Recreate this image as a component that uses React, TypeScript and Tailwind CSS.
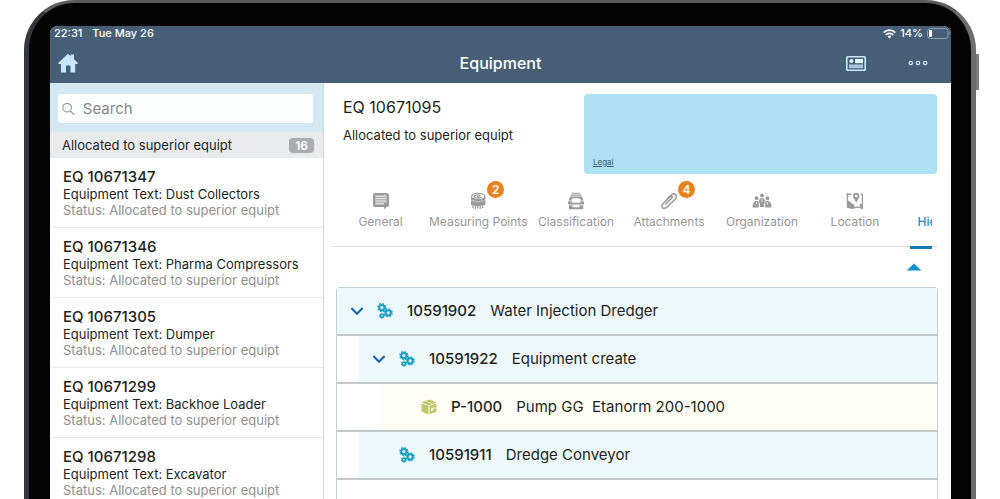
import React, { useState } from 'react';

type Equipment = { id: string; text: string };

type Node = {
  id: string;
  text: string;
  kind: 'equipment' | 'part';
  level: number;
  open?: boolean;
};

const equipment: Equipment[] = [
  { id: 'EQ 10671347', text: 'Dust Collectors' },
  { id: 'EQ 10671346', text: 'Pharma Compressors' },
  { id: 'EQ 10671305', text: 'Dumper' },
  { id: 'EQ 10671299', text: 'Backhoe Loader' },
  { id: 'EQ 10671298', text: 'Excavator' },
];

const nodes: Node[] = [
  { id: '10591902', text: 'Water Injection Dredger', kind: 'equipment', level: 0, open: true },
  { id: '10591922', text: 'Equipment create', kind: 'equipment', level: 1, open: true },
  { id: 'P-1000', text: 'Pump GG  Etanorm 200-1000', kind: 'part', level: 2 },
  { id: '10591911', text: 'Dredge Conveyor', kind: 'equipment', level: 1 },
];

const indents = ['ml-0', 'ml-[22px]', 'ml-[44px]'];

const HomeIcon = () => (
  <svg width="20" height="20" viewBox="0 0 20 20" fill="#c9e6ff">
    <path d="M10 0.8 L12.6 3.2 V1.6 H16 V6.3 L19.6 9.8 V11 H17.2 V19.4 H12.4 V12.4 H8 V19.4 H3 V11 H0.4 V9.8 Z" />
  </svg>
);

const WifiIcon = () => (
  <svg width="13" height="10" viewBox="0 0 13 10" fill="none" stroke="#fff" strokeWidth="1.7">
    <path d="M0.7 3.6 A8.2 8.2 0 0 1 12.3 3.6" />
    <path d="M2.8 5.9 A5.2 5.2 0 0 1 10.2 5.9" />
    <path d="M6.5 9.6 L4.5 7.5 A2.9 2.9 0 0 1 8.5 7.5 Z" fill="#fff" stroke="none" />
  </svg>
);

const BatteryIcon = () => (
  <svg width="24" height="11" viewBox="0 0 24 11">
    <rect x="0.5" y="0.5" width="20.5" height="10" rx="3" fill="none" stroke="#8da0b0" />
    <rect x="2" y="2" width="3" height="7" rx="1" fill="#fff" />
    <path d="M22.2 3.6 Q23.6 5.5 22.2 7.4 Z" fill="#8da0b0" />
  </svg>
);

const CardIcon = () => (
  <svg width="20" height="15" viewBox="0 0 20 15">
    <rect x="0.8" y="0.8" width="18.4" height="13.4" rx="0.8" fill="none" stroke="#c9e6ff" strokeWidth="1.6" />
    <circle cx="5.4" cy="5" r="2" fill="#e6f4ff" />
    <rect x="9" y="3" width="8" height="4.2" fill="#e6f4ff" />
    <rect x="3" y="8.4" width="14" height="3.8" fill="#a9c4dc" />
  </svg>
);

const DotsIcon = () => (
  <svg width="20" height="6" viewBox="0 0 20 6" fill="none" stroke="#d6ebff" strokeWidth="1.2">
    <circle cx="2.8" cy="3" r="1.7" />
    <circle cx="10" cy="3" r="1.7" />
    <circle cx="17.2" cy="3" r="1.7" />
  </svg>
);

const SearchIcon = () => (
  <svg width="14" height="14" viewBox="0 0 14 14" fill="none" stroke="#85888c" strokeWidth="1.1">
    <circle cx="5.6" cy="5.6" r="4.7" />
    <path d="M9 9 L13.2 13.2" />
  </svg>
);

const GeneralIcon = () => (
  <svg width="18" height="18" viewBox="0 0 18 18">
    <path d="M3 1 H15 Q17 1 17 3 V13 Q17 15 15 15 H14.2 L12 17.4 V15 H3 Q1 15 1 13 V3 Q1 1 3 1 Z" fill="#9a9a9a" />
    <path d="M3.4 3.4 H14.6 V11 H12 V12.6 H3.4 Z" fill="#e4e4e4" />
    <path d="M3.4 5.4 H14.6 M3.4 7.8 H14.6 M3.4 10.2 H14.6" stroke="#9a9a9a" strokeWidth="0.9" />
  </svg>
);

const MeasuringIcon = () => (
  <svg width="18" height="18" viewBox="0 0 18 18">
    <path d="M2 4.5 V13 H3.4 V16 H4.6 V13.6 H5.8 V17 H7 V13.9 H8.2 V16.6 H9.4 V13.9 H10.6 V17 H11.8 V13.6 H13 V16 H14.2 V13 H16.4 V4.5 Z" fill="#9a9a9a" />
    <ellipse cx="9.2" cy="4.4" rx="6.7" ry="3.1" fill="#fff" stroke="#9a9a9a" strokeWidth="1.1" />
    <path d="M13.2 4.8 A4 1.6 0 1 1 9.6 2.9 Q12 3.3 10.8 4.4 Q9.6 5.2 8 4.5" fill="none" stroke="#9a9a9a" strokeWidth="1.1" />
    <path d="M2.3 8.4 Q8 11 15 8.6" fill="none" stroke="#d2d2d2" strokeWidth="0.9" />
  </svg>
);

const ClassificationIcon = () => (
  <svg width="18" height="18" viewBox="0 0 18 18" fill="#9a9a9a">
    <path d="M5 0.8 H13.4 V1.8 H5 Z M4 2.6 H14.4 V3.8 H4 Z" />
    <path d="M3.2 4.6 H15 L16.6 8.4 H14 Q13.4 6.2 11.6 6.2 H6.6 Q4.8 6.2 4.2 8.4 H1.6 Z" />
    <path d="M1.2 9.3 H5 V10.8 H13.2 V9.3 H17 V12.6 H1.2 Z" />
    <path d="M2 13.2 H5.6 V15.2 H12.6 V13.2 H16.2 V17.2 H2 Z" />
  </svg>
);

const AttachmentIcon = () => (
  <svg width="18" height="18" viewBox="0 0 18 18" fill="none" stroke="#9a9a9a" strokeWidth="1.5" strokeLinecap="round">
    <path d="M5.6 12.2 L11.6 6.2 Q12.8 5 11.9 4.3 Q11 3.8 9.8 5 L3.2 11.4 Q0.8 14 2.6 15.8 Q4.6 17.4 7.2 14.9 L14.8 7.5 Q17.6 4.6 15.6 2.6 Q13.3 0.8 10.6 3.5 L7.4 6.6" />
  </svg>
);

const OrganizationIcon = () => (
  <svg width="20" height="18" viewBox="0 0 20 18" fill="#9a9a9a">
    <circle cx="10" cy="3.4" r="2" />
    <circle cx="4.6" cy="6.2" r="1.9" />
    <circle cx="15.4" cy="6.2" r="1.9" />
    <path d="M7 9.6 Q7 6 10 6 Q13 6 13 9.6 L12.2 11.4 V15 H7.8 V11.4 Z" />
    <path d="M0.6 15.4 Q0.6 9 4.6 8.8 Q6 8.9 6.8 10 V15.4 Z" />
    <path d="M19.4 15.4 Q19.4 9 15.4 8.8 Q14 8.9 13.2 10 V15.4 Z" />
    <path d="M9.6 7 H10.4 L10.3 10 H9.7 Z M4.2 10 H5 L4.9 12.6 H4.3 Z M15 10 H15.8 L15.7 12.6 H15.1 Z" fill="#fff" />
  </svg>
);

const LocationIcon = () => (
  <svg width="18" height="18" viewBox="0 0 18 18">
    <path d="M5.5 2.6 L1.4 1.6 V15 L5.8 16.4 L11.5 15 L16.4 16.4 V2.6 L14.4 1.8" fill="none" stroke="#9a9a9a" strokeWidth="1.3" />
    <path d="M1.6 8.8 Q4.6 9 5 11 Q8.6 11.6 8.8 15.4 L5.8 16.6 L1.6 15.2 Z" fill="#9a9a9a" />
    <path d="M14 12 H16.2 V16 L14 15.2 Z" fill="#9a9a9a" />
    <path d="M10.2 0.8 A3.2 3.2 0 0 1 13.4 4 Q13.4 6 10.2 10.4 Q7 6 7 4 A3.2 3.2 0 0 1 10.2 0.8 Z" fill="#9a9a9a" />
    <circle cx="10.2" cy="4" r="1.3" fill="#fff" />
  </svg>
);

const GearsIcon = () => (
  <svg width="16" height="16" viewBox="0 0 16 16" fill="none" stroke="#1b9cc4">
    <circle cx="4.8" cy="4.6" r="2.6" strokeWidth="2" />
    <circle cx="4.8" cy="4.6" r="3.9" strokeWidth="1.4" strokeDasharray="1.7 1.36" />
    <circle cx="11.2" cy="9.8" r="2.6" strokeWidth="2" />
    <circle cx="11.2" cy="9.8" r="3.9" strokeWidth="1.4" strokeDasharray="1.7 1.36" />
    <circle cx="4.9" cy="12.8" r="1.6" strokeWidth="1.6" />
    <circle cx="4.9" cy="12.8" r="2.6" strokeWidth="0.9" strokeDasharray="1.2 0.84" />
  </svg>
);

const BoxIcon = () => (
  <svg width="16" height="16" viewBox="0 0 16 16">
    <path d="M8 0.6 L15.2 3.4 L8 6.2 L0.8 3.4 Z" fill="#b9c25c" />
    <path d="M0.6 4.2 L7.5 6.9 V15.4 L0.6 12.4 Z" fill="#bfc76b" />
    <path d="M15.4 4.2 L8.5 6.9 V15.4 L15.4 12.4 Z" fill="#bfc76b" />
    <path d="M4.4 2 L11.6 4.8" stroke="#fffff4" strokeWidth="0.7" />
    <path d="M10 9.6 L13.6 8.2 V9.6 L11.6 10.4 V12 L10 12.6 Z" fill="#fffff4" />
  </svg>
);

const ChevronIcon = () => (
  <svg width="14" height="14" viewBox="0 0 14 14" fill="none" stroke="#1a62ae" strokeWidth="2">
    <path d="M1.4 4 L7 9.8 L12.6 4" />
  </svg>
);

const tabs = [
  { label: 'General', icon: <GeneralIcon /> },
  { label: 'Measuring Points', icon: <MeasuringIcon />, badge: 2 },
  { label: 'Classification', icon: <ClassificationIcon /> },
  { label: 'Attachments', icon: <AttachmentIcon />, badge: 4 },
  { label: 'Organization', icon: <OrganizationIcon /> },
  { label: 'Location', icon: <LocationIcon /> },
];

const Header = () => (
  <header className="shrink-0 bg-[#465f76] text-white">
    <div className="flex h-[15px] items-center justify-between pl-1 text-[11px] leading-[15px] font-medium">
      <div className="flex gap-[10px]">
        <span>22:31</span>
        <span>Tue May 26</span>
      </div>
      <div className="flex items-center gap-1">
        <WifiIcon />
        <span>14%</span>
        <BatteryIcon />
      </div>
    </div>
    <div className="grid h-[42px] grid-cols-[1fr_auto_1fr] items-center pt-[2px] pr-[23px] pl-2">
      <button aria-label="Home" className="justify-self-start"><HomeIcon /></button>
      <h1 className="pl-[15px] text-base leading-5 font-medium">Equipment</h1>
      <div className="flex items-center gap-[42px] justify-self-end">
        <button aria-label="Details"><CardIcon /></button>
        <button aria-label="More"><DotsIcon /></button>
      </div>
    </div>
  </header>
);

const Sidebar = () => (
  <aside className="w-[274px] shrink-0 border-r border-[#d3d6d9]">
    <div className="bg-[#d5e7f3] px-2 pt-[11px] pb-[9px]">
      <label className="mr-[2px] flex h-[29px] items-center gap-2 rounded-[3px] bg-[#fcfeff] px-1">
        <SearchIcon />
        <input
          type="text"
          aria-label="Search"
          placeholder="Search"
          className="w-full bg-transparent text-[15px] leading-5 outline-none placeholder:text-[#85888c]"
        />
      </label>
    </div>
    <div className="flex h-[26px] items-center justify-between bg-[#e9eaeb] pr-[9px] pl-3 text-[13px] leading-4">
      <h2>Allocated to superior equipt</h2>
      <span className="rounded-[4px] bg-[#a9adb2] px-[6px] text-xs leading-[15px] font-semibold text-white">16</span>
    </div>
    <ul className="ml-[2px]">
      {equipment.map((item) => (
        <li key={item.id} className="h-[70px] border-b border-[#e8e9ea] pt-[9px] pl-[11px]">
          <p className="text-[15px] leading-[19px] font-medium">{item.id}</p>
          <p className="text-[13px] leading-4">Equipment Text: {item.text}</p>
          <p className="text-[13px] leading-4 text-[#8f8f8f]">Status: Allocated to superior equipt</p>
        </li>
      ))}
    </ul>
  </aside>
);

const TabBar = () => (
  <div className="mr-[14px] ml-2 h-[73px] border-b border-[#dadcdd]">
    <nav className="mr-[5px] flex h-[75px] overflow-hidden pl-[2px] text-xs leading-4">
      {tabs.map((tab) => (
        <button key={tab.label} className="flex min-w-[93px] shrink-0 flex-col items-center gap-1 px-[2px] pt-[18px] text-[#979797]">
          <span className="relative">
            {tab.icon}
            {tab.badge && (
              <span className="absolute -top-[11px] left-[18px] h-[17px] w-[17px] rounded-full bg-[#e5831c] text-center text-xs leading-[17px] font-semibold text-white">
                {tab.badge}
              </span>
            )}
          </span>
          {tab.label}
        </button>
      ))}
      <button className="ml-2 shrink-0 border-b-[3px] border-[#127bb8] px-2 pt-[23px] font-medium text-[#1a8cc6]">Hierarchy</button>
    </nav>
  </div>
);

const Hierarchy = () => {
  const [collapsed, setCollapsed] = useState(false);

  return (
    <>
      <div className="flex h-10 items-center justify-end pr-[29px]">
        <button aria-label="Collapse hierarchy" onClick={() => setCollapsed(!collapsed)}>
          <svg width="16" height="8" viewBox="0 0 16 8" fill="#0f93c8">
            <path d="M8 0.4 L15.4 7.6 H0.6 Z" />
          </svg>
        </button>
      </div>
      <ul className="mr-[13px] ml-3 flex-1 rounded-t-[4px] border border-b-0 border-[#c2d3d8]">
        {!collapsed && nodes.map((node) => (
          <li key={node.id} className="border-b-2 border-[#c3c8ca]">
            <div className={`${indents[node.level]} ${node.kind === 'part' ? 'bg-[#fffff6]' : 'bg-[#edf8fa]'} flex h-[46px] items-center pl-[13px] text-[15px] leading-5`}>
              {node.open ? (
                <button aria-label={`Toggle ${node.id}`} className="w-[27px]"><ChevronIcon /></button>
              ) : (
                <span className="w-[27px]" />
              )}
              {node.kind === 'part' ? <BoxIcon /> : <GearsIcon />}
              <span className="ml-[14px] font-medium">{node.id}</span>
              <span className="ml-[14px] whitespace-pre">{node.text}</span>
            </div>
          </li>
        ))}
      </ul>
    </>
  );
};

const App = () => {
  return (
    <div className="h-screen overflow-hidden bg-white font-['Inter',sans-serif] text-[#1d1f21]">
      <div className="relative mr-6 ml-6 h-full rounded-t-[50px] border-x-[5px] border-t-[3px] border-t-[#5a5c5e] border-r-[#6d6d6e] border-l-[#33363a] bg-[#040405] pt-[23px] pr-5 pl-[21px]">
        {/* Power button on the side of the tablet */}
        <span className="absolute top-[51px] -right-2 h-9 w-[3px] bg-[#7c7c7d]" />
        <div className="flex h-full flex-col overflow-hidden rounded-t-[8px] bg-white">
          <Header />
          <div className="flex min-h-0 flex-1">
            <Sidebar />
            <main className="flex min-w-0 flex-1 flex-col">
              <section className="flex pt-[11px] pr-[14px] pl-[19px]">
                <div className="flex-1">
                  <h2 className="pt-[3px] text-base leading-5">EQ 10671095</h2>
                  <p className="pt-[10px] text-[13px] leading-4">Allocated to superior equipt</p>
                </div>
                <div className="flex h-20 w-[353px] items-end rounded-[4px] bg-[#aee1f4] pb-[7px] pl-[9px]">
                  <a href="#legal" className="text-[8px] leading-[10px] text-[#3d5a72] underline">Legal</a>
                </div>
              </section>
              <TabBar />
              <Hierarchy />
            </main>
          </div>
        </div>
      </div>
    </div>
  );
};

export default App;
